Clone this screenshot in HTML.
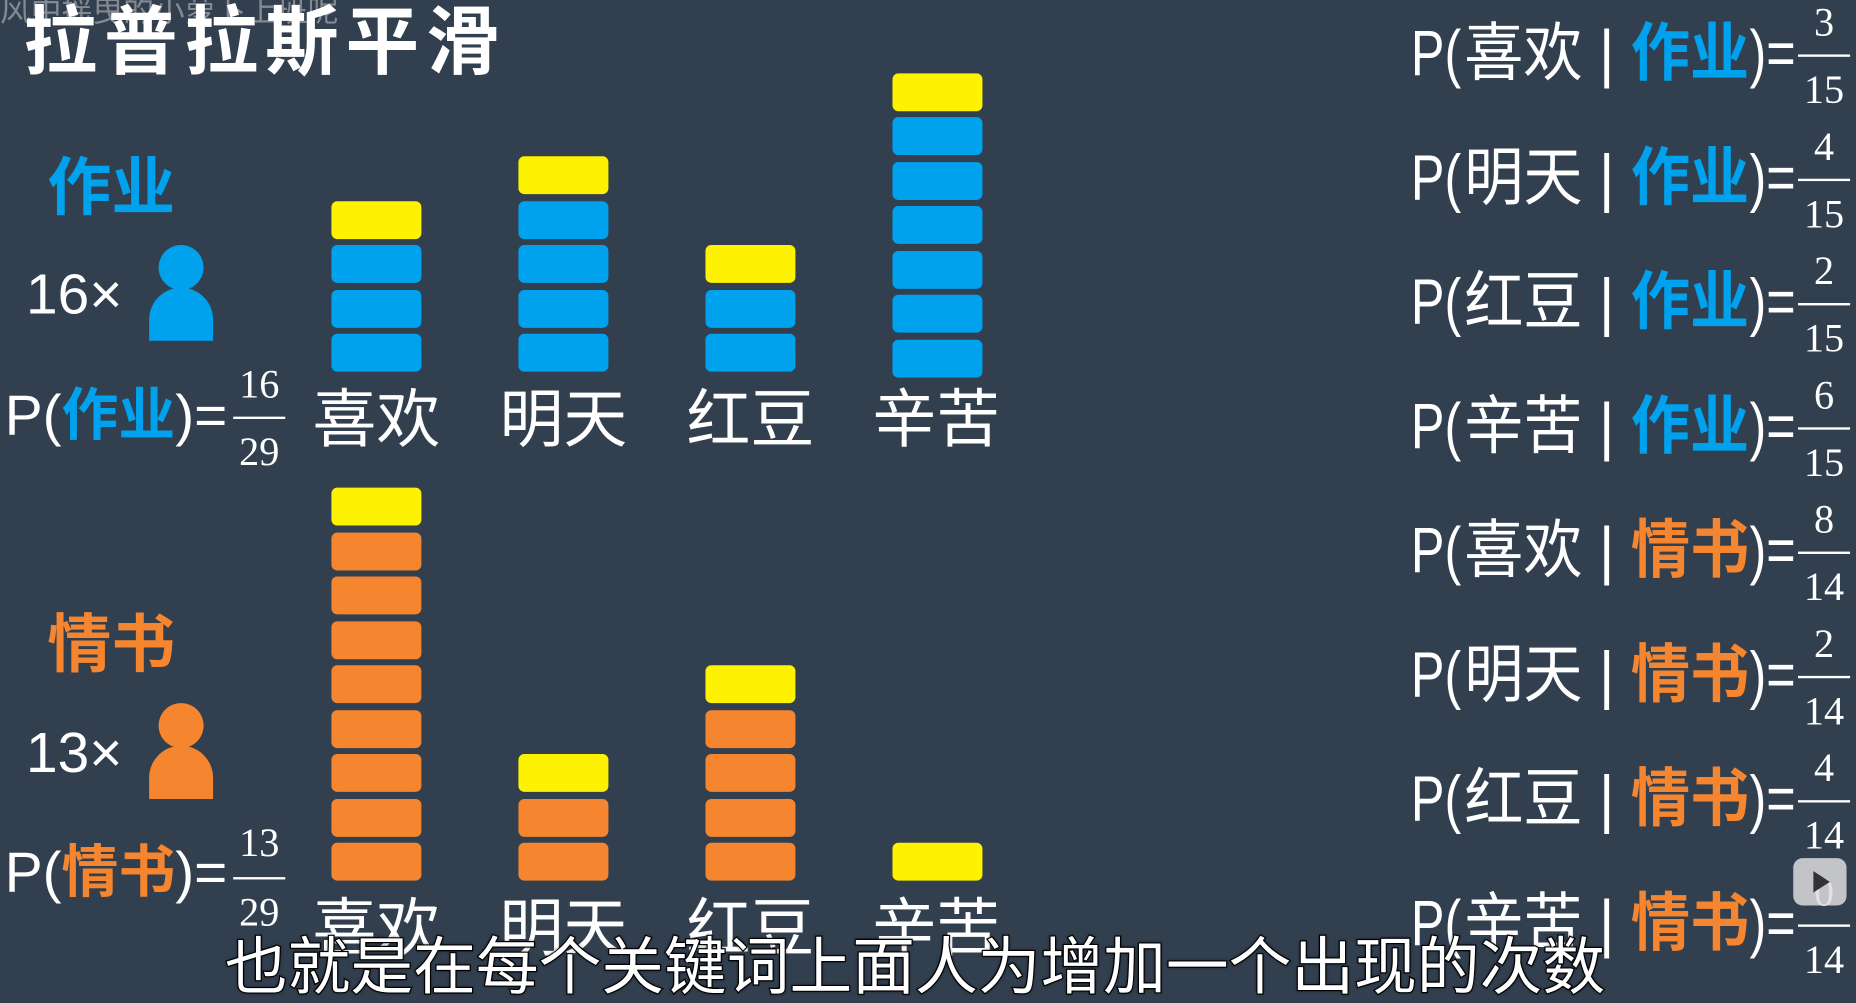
<!DOCTYPE html>
<html><head><meta charset="utf-8"><style>
html,body{margin:0;padding:0;background:#323f4f;overflow:hidden;width:1856px;height:1002px}
#s{position:absolute;left:0;top:0;width:1568px;height:847px;transform:scale(1.18367);transform-origin:0 0;font-family:"Liberation Sans","Noto Sans CJK SC",sans-serif;color:#fff}
.a{position:absolute;white-space:nowrap;line-height:1}
.b{position:absolute;width:76px;height:32px;border-radius:5px}
.y{background:#fff200}.bl{background:#00a2ed}.o{background:#f5862f}
.blue{color:#00a2ed;font-weight:bold}.org{color:#f5862f;font-weight:bold}
.fr{position:absolute;font-family:"Liberation Serif",serif;font-size:34px;text-align:center;width:44px;line-height:1}
.ln{position:absolute;height:2px;background:#fff}
.sub{-webkit-text-stroke:2px #000;paint-order:stroke fill;text-shadow:0 0 3px #000}
.r{font-size:50px;transform:scaleY(1.08);transform-origin:0 50%}
.r .p{display:inline-block;transform:scaleX(.85);transform-origin:0 50%;margin-right:-5px}
</style></head><body><div id="s">
<div class="a" style="left:0;top:-4px;font-size:26px;color:rgba(200,200,200,.55)">风中摇曳的小萝卜上班呢</div>
<div class="a" style="left:20px;top:6px;font-size:62px;font-weight:bold;letter-spacing:6px;transform:scaleY(1.02)">拉普拉斯平滑</div>

<div class="a blue" style="left:40px;top:132px;font-size:54px">作业</div>
<div class="a" style="left:22px;top:226px;font-size:48px">16×</div>
<svg class="a" style="left:124px;top:206px" width="58" height="82"><circle cx="29" cy="20" r="19" fill="#00a2ed"/><path d="M2 82V64a27 27 0 0 1 54 0v18z" fill="#00a2ed"/></svg>
<div class="a" style="left:4px;top:328px;font-size:48px">P(<span class="blue">作业</span>)=</div>
<div class="fr" style="left:197px;top:309px">16</div><div class="ln" style="left:197px;top:352px;width:44px"></div><div class="fr" style="left:197px;top:366px">29</div>

<div class="a org" style="left:40px;top:518px;font-size:54px">情书</div>
<div class="a" style="left:22px;top:613px;font-size:48px">13×</div>
<svg class="a" style="left:124px;top:593px" width="58" height="82"><circle cx="29" cy="20" r="19" fill="#f5862f"/><path d="M2 82V64a27 27 0 0 1 54 0v18z" fill="#f5862f"/></svg>
<div class="a" style="left:4px;top:714px;font-size:48px">P(<span class="org">情书</span>)=</div>
<div class="fr" style="left:197px;top:696px">13</div><div class="ln" style="left:197px;top:741px;width:44px"></div><div class="fr" style="left:197px;top:755px">29</div>

<div class="b y" style="left:280px;top:170px"></div><div class="b bl" style="left:280px;top:207px"></div><div class="b bl" style="left:280px;top:245px"></div><div class="b bl" style="left:280px;top:282px"></div>
<div class="b y" style="left:438px;top:132px"></div><div class="b bl" style="left:438px;top:170px"></div><div class="b bl" style="left:438px;top:207px"></div><div class="b bl" style="left:438px;top:245px"></div><div class="b bl" style="left:438px;top:282px"></div>
<div class="b y" style="left:596px;top:207px"></div><div class="b bl" style="left:596px;top:245px"></div><div class="b bl" style="left:596px;top:282px"></div>
<div class="b y" style="left:754px;top:62px"></div><div class="b bl" style="left:754px;top:99px"></div><div class="b bl" style="left:754px;top:137px"></div><div class="b bl" style="left:754px;top:174px"></div><div class="b bl" style="left:754px;top:212px"></div><div class="b bl" style="left:754px;top:249px"></div><div class="b bl" style="left:754px;top:287px"></div>
<div class="a" style="left:264px;top:328px;font-size:54px">喜欢</div>
<div class="a" style="left:422px;top:328px;font-size:54px">明天</div>
<div class="a" style="left:580px;top:328px;font-size:54px">红豆</div>
<div class="a" style="left:737px;top:328px;font-size:54px">辛苦</div>

<div class="b y" style="left:280px;top:412px"></div><div class="b o" style="left:280px;top:450px"></div><div class="b o" style="left:280px;top:487px"></div><div class="b o" style="left:280px;top:525px"></div><div class="b o" style="left:280px;top:562px"></div><div class="b o" style="left:280px;top:600px"></div><div class="b o" style="left:280px;top:637px"></div><div class="b o" style="left:280px;top:675px"></div><div class="b o" style="left:280px;top:712px"></div>
<div class="b y" style="left:438px;top:637px"></div><div class="b o" style="left:438px;top:675px"></div><div class="b o" style="left:438px;top:712px"></div>
<div class="b y" style="left:596px;top:562px"></div><div class="b o" style="left:596px;top:600px"></div><div class="b o" style="left:596px;top:637px"></div><div class="b o" style="left:596px;top:675px"></div><div class="b o" style="left:596px;top:712px"></div>
<div class="b y" style="left:754px;top:712px"></div>
<div class="a" style="left:264px;top:758px;font-size:54px">喜欢</div>
<div class="a" style="left:422px;top:758px;font-size:54px">明天</div>
<div class="a" style="left:580px;top:758px;font-size:54px">红豆</div>
<div class="a" style="left:737px;top:758px;font-size:54px">辛苦</div>

<div class="a r" style="left:1192px;top:20px"><span class="p">P(</span>喜欢 | <span class="blue">作业</span><span class="p">)=</span></div>
<div class="a r" style="left:1192px;top:125px"><span class="p">P(</span>明天 | <span class="blue">作业</span><span class="p">)=</span></div>
<div class="a r" style="left:1192px;top:230px"><span class="p">P(</span>红豆 | <span class="blue">作业</span><span class="p">)=</span></div>
<div class="a r" style="left:1192px;top:335px"><span class="p">P(</span>辛苦 | <span class="blue">作业</span><span class="p">)=</span></div>
<div class="a r" style="left:1192px;top:440px"><span class="p">P(</span>喜欢 | <span class="org">情书</span><span class="p">)=</span></div>
<div class="a r" style="left:1192px;top:545px"><span class="p">P(</span>明天 | <span class="org">情书</span><span class="p">)=</span></div>
<div class="a r" style="left:1192px;top:650px"><span class="p">P(</span>红豆 | <span class="org">情书</span><span class="p">)=</span></div>
<div class="a r" style="left:1192px;top:755px"><span class="p">P(</span>辛苦 | <span class="org">情书</span><span class="p">)=</span></div>

<div class="fr" style="left:1519px;top:3px">3</div><div class="ln" style="left:1519px;top:46px;width:44px"></div><div class="fr" style="left:1519px;top:60px">15</div>
<div class="fr" style="left:1519px;top:108px">4</div><div class="ln" style="left:1519px;top:151px;width:44px"></div><div class="fr" style="left:1519px;top:165px">15</div>
<div class="fr" style="left:1519px;top:213px">2</div><div class="ln" style="left:1519px;top:256px;width:44px"></div><div class="fr" style="left:1519px;top:270px">15</div>
<div class="fr" style="left:1519px;top:318px">6</div><div class="ln" style="left:1519px;top:361px;width:44px"></div><div class="fr" style="left:1519px;top:375px">15</div>
<div class="fr" style="left:1519px;top:423px">8</div><div class="ln" style="left:1519px;top:466px;width:44px"></div><div class="fr" style="left:1519px;top:480px">14</div>
<div class="fr" style="left:1519px;top:528px">2</div><div class="ln" style="left:1519px;top:571px;width:44px"></div><div class="fr" style="left:1519px;top:585px">14</div>
<div class="fr" style="left:1519px;top:633px">4</div><div class="ln" style="left:1519px;top:676px;width:44px"></div><div class="fr" style="left:1519px;top:690px">14</div>
<div class="fr" style="left:1519px;top:738px">0</div><div class="ln" style="left:1519px;top:781px;width:44px"></div><div class="fr" style="left:1519px;top:795px">14</div>
<div class="a" style="left:1515px;top:725px;width:45px;height:40px;border-radius:8px;background:rgba(220,220,220,.85)"></div>
<svg class="a" style="left:1530px;top:735px" width="18" height="20"><path d="M2 1L16 10L2 19Z" fill="#333"/></svg>

<div class="a sub" style="left:190px;top:791px;font-size:53px">也就是在每个关键词上面人为增加一个出现的次数</div>
</div></body></html>
